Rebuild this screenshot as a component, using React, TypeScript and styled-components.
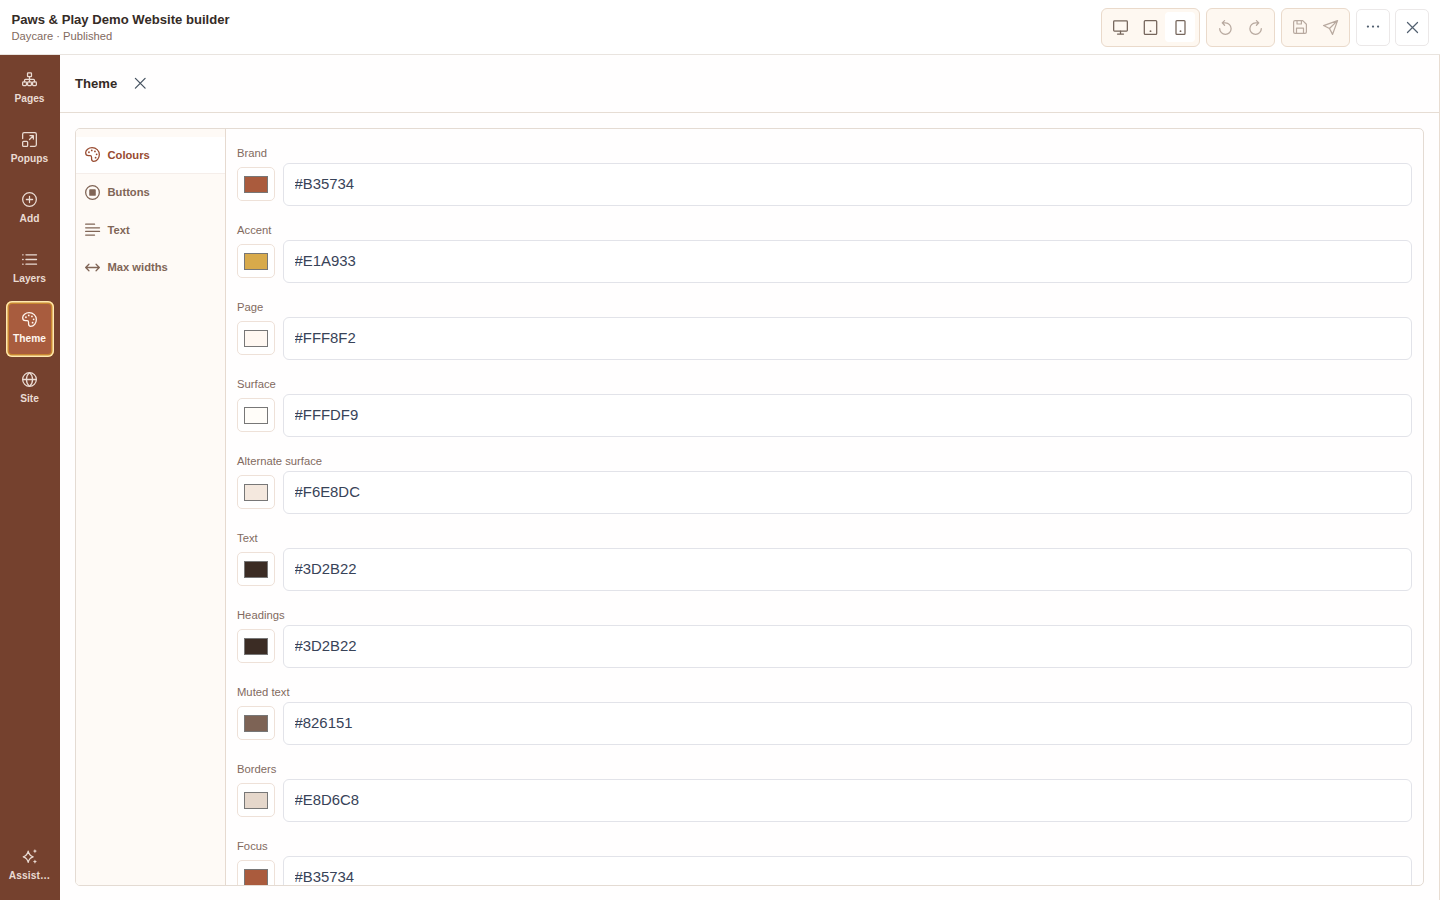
import React from 'react';
import styled, { createGlobalStyle, css } from 'styled-components';

const GlobalStyle = createGlobalStyle`
  *, *::before, *::after { box-sizing: border-box; }
  html, body { margin: 0; padding: 0; height: 100%; overflow: hidden; }
  body { font-family: 'Liberation Sans', Arial, Helvetica, sans-serif; background: #fffefd; }
  button, input { font-family: inherit; margin: 0; }
`;

const icons = {
  sitemap: (
    <>
      <rect x="5.9" y="0.9" width="4.2" height="4" rx="0.6" />
      <path d="M8 4.9v5.6M2.7 10.5V8.9a1 1 0 0 1 1-1h8.6a1 1 0 0 1 1 1v1.6" />
      <rect x="0.7" y="10.5" width="4" height="4" rx="0.9" />
      <rect x="6" y="10.5" width="4" height="4" rx="0.9" />
      <rect x="11.3" y="10.5" width="4" height="4" rx="0.9" />
    </>
  ),
  popup: (
    <>
      <path d="M0.7 7V2.3a1.6 1.6 0 0 1 1.6-1.6h11.4a1.6 1.6 0 0 1 1.6 1.6v11.4a1.6 1.6 0 0 1-1.6 1.6H9" />
      <rect x="0.7" y="10" width="5.3" height="5.3" rx="1" />
      <path d="M8 8l4-4M8.5 3.9H12.1V7.5" />
    </>
  ),
  plusCircle: (
    <>
      <circle cx="8" cy="8" r="7.3" />
      <path d="M8 4.7v6.6M4.7 8h6.6" />
    </>
  ),
  list: (
    <>
      <path d="M4.2 3h11.3M4.2 8h11.3M4.2 13h11.3" />
      <path d="M0.7 3h0.5M0.7 8h0.5M0.7 13h0.5" />
    </>
  ),
  palette: (
    <>
      <path d="M7.6 0.7C3.8 0.7 0.7 3.2 0.7 6c0 2 1.3 3.1 3.1 3.1h1.7c1.1 0 1.5 0.7 1.5 1.7v1.8c0 1.7 0.9 2.7 2.3 2.7 3.3 0 6-3.2 6-7.2 0-4.2-3.4-7.4-7.7-7.4z" />
      <g fill="currentColor" stroke="none">
        <circle cx="4.2" cy="5.6" r="0.95" />
        <circle cx="7.2" cy="3.7" r="0.95" />
        <circle cx="10.6" cy="4.7" r="0.95" />
        <circle cx="12.4" cy="7.8" r="0.95" />
        <circle cx="11.3" cy="11.4" r="0.95" />
      </g>
    </>
  ),
  globe: (
    <>
      <circle cx="8" cy="8" r="7.3" />
      <path d="M0.7 8h14.6M8 0.7c-2.2 2-3.3 4.5-3.3 7.3S5.8 13.3 8 15.3c2.2-2 3.3-4.5 3.3-7.3S10.2 2.7 8 0.7z" />
    </>
  ),
  sparkles: (
    <>
      <path d="M6.6 2.3c0.7 3.6 1.8 5 5.3 6-3.5 1-4.6 2.4-5.3 6-0.7-3.6-1.8-5-5.3-6 3.5-1 4.6-2.4 5.3-6z" />
      <g fill="currentColor" stroke="none">
        <path d="M13.8 0l0.7 1.500 1.500 0.700-1.500 0.700-0.700 1.500-0.700-1.500-1.500-0.700 1.500-0.700z" />
        <path d="M13.800 11.200l0.700 1.500 1.500 0.700-1.500 0.700-0.700 1.500-0.700-1.500-1.500-0.700 1.500-0.700z" />
      </g>
    </>
  ),
  stopCircle: (
    <>
      <circle cx="8" cy="8" r="7.3" />
      <rect x="4.500" y="4.500" width="7" height="7" rx="0.900" fill="currentColor" stroke="none" />
    </>
  ),
  alignLeft: <path d="M0.700 2.300h9.500M0.700 6.200h14.800M0.700 10h14.800M0.700 13.900h9.500" />,
  arrowsH: <path d="M0.700 8h14.600M4.200 4.500L0.700 8l3.500 3.500M11.800 4.500L15.300 8l-3.500 3.500" />,
  desktop: (
    <>
      <rect x="0.700" y="1" width="14.600" height="10.800" rx="0.900" />
      <path d="M8 11.800v3M4.800 15h6.400" />
    </>
  ),
  tablet: (
    <>
      <rect x="1.400" y="0.700" width="13.200" height="14.600" rx="1" />
      <circle cx="8" cy="11.900" r="1" fill="currentColor" stroke="none" />
    </>
  ),
  mobile: (
    <>
      <rect x="3.200" y="0.700" width="9.600" height="14.600" rx="1" />
      <circle cx="8" cy="11.900" r="1" fill="currentColor" stroke="none" />
    </>
  ),
  undo: <path d="M7 0.700L4.500 3.100 7 5.600M4.700 3.100H8a6.100 6.100 0 1 1-6.200 6.100" />,
  redo: <path d="M9 0.700l2.500 2.400L9 5.600M11.300 3.100H8a6.100 6.100 0 1 0 6.200 6.100" />,
  save: (
    <>
      <path d="M2.300 0.700h8.800l4.200 4.200v8.800a1.600 1.600 0 0 1-1.600 1.600H2.300a1.600 1.600 0 0 1-1.600-1.600V2.300a1.600 1.600 0 0 1 1.600-1.600z" />
      <path d="M4 15.300V9.300h8v6M4.600 0.700v3.900h5V0.700" />
    </>
  ),
  send: <path d="M15.500 0.700L0.600 5.900l6.300 3.200 3.300 6.200zM15.500 0.700L6.900 9.100" />,
  ellipsis: (
    <g fill="currentColor" stroke="none">
      <circle cx="2.200" cy="7.500" r="1.300" />
      <circle cx="8" cy="7.500" r="1.300" />
      <circle cx="13.800" cy="7.500" r="1.300" />
    </g>
  ),
  times: <path d="M1.800 1.800l12.400 12.400M14.200 1.800L1.800 14.200" />,
};

type IconName = keyof typeof icons;

const Svg = styled.svg<{ $size: number }>`
  display: block;
  flex: none;
  width: ${(p) => p.$size}px;
  height: ${(p) => p.$size}px;
  overflow: visible;
`;

function Icon({ name, size = 15, weight = 1.35 }: { name: IconName; size?: number; weight?: number }) {
  return (
    <Svg
      $size={size}
      viewBox="0 0 16 16"
      fill="none"
      stroke="currentColor"
      strokeWidth={weight}
      strokeLinecap="round"
      strokeLinejoin="round"
      aria-hidden="true"
    >
      {icons[name]}
    </Svg>
  );
}

const Shell = styled.div`
  display: flex;
  flex-direction: column;
  width: 100vw;
  height: 100vh;
  color: #352b26;
`;

const Header = styled.header`
  display: flex;
  flex: none;
  align-items: center;
  justify-content: space-between;
  height: 55px;
  padding: 0 11px 0 11.5px;
  background: #fff;
  border-bottom: 1px solid #e9e4df;
`;

const TitleBlock = styled.div`
  display: flex;
  flex-direction: column;
  gap: 2px;
  padding-top: 2px;
`;

const SiteTitle = styled.h1`
  margin: 0;
  font-size: 13.1px;
  line-height: 15px;
  font-weight: 700;
  white-space: nowrap;
`;

const SiteStatus = styled.span`
  font-size: 11.2px;
  line-height: 15px;
  color: #826a5e;
`;

const Actions = styled.div`
  display: flex;
  align-items: center;
  gap: 5.500px;
`;

const ButtonGroup = styled.div`
  display: flex;
  align-items: center;
  height: 39px;
  padding: 0 3.750px;
  background: #fef8f1;
  border: 1px solid #eadacb;
  border-radius: 6px;
`;

const ToolButton = styled.button<{ $active?: boolean; $muted?: boolean }>`
  display: flex;
  align-items: center;
  justify-content: center;
  width: 30px;
  height: 30px;
  padding: 0;
  border: 0;
  border-radius: 4px;
  background: ${(p) => (p.$active ? '#fff' : 'transparent')};
  color: ${(p) => (p.$muted ? '#b8a99f' : '#75655b')};
`;

const SquareButton = styled.button`
  display: flex;
  align-items: center;
  justify-content: center;
  width: 34px;
  height: 37px;
  padding: 0;
  background: #fff;
  border: 1px solid #ebe8e8;
  border-radius: 5px;
  color: #526070;
`;

const Body = styled.div`
  display: flex;
  flex: 1;
  min-height: 0;
`;

const Rail = styled.nav`
  display: flex;
  flex: none;
  flex-direction: column;
  gap: 4px;
  width: 60px;
  padding: 6px 5.500px 12px;
  background: #75412e;
`;

const RailItem = styled.button<{ $active?: boolean; $last?: boolean }>`
  display: flex;
  flex: none;
  flex-direction: column;
  align-items: center;
  gap: 5px;
  width: 48px;
  height: 56px;
  padding: 11px 0 0;
  border: 0;
  border-radius: 6px;
  background: transparent;
  color: #eadbd3;
  font-size: 10.2px;
  line-height: 13px;
  font-weight: 700;
  white-space: nowrap;
  ${(p) =>
    p.$active &&
    css`
      background: #a85c3e;
      color: #fff6ef;
      box-shadow: inset 0 0 0 1.5px #ffe9ae, inset 0 0 0 3px #c98731;
    `}
  ${(p) =>
    p.$last &&
    css`
      margin-top: auto;
      height: 50px;
      letter-spacing: 0.1px;
    `}
`;

const RailLabel = styled.span`
  margin: 0 -2px;
`;

const Panel = styled.main`
  display: flex;
  flex: 1;
  flex-direction: column;
  min-width: 0;
  background: #fffefe;
  border-right: 1px solid #e8ddd2;
`;

const PanelHeader = styled.div`
  display: flex;
  flex: none;
  align-items: center;
  gap: 16.5px;
  height: 58px;
  padding: 0 15px;
  border-bottom: 1px solid #e6ddd4;
`;

const PanelTitle = styled.h2`
  margin: 0;
  font-size: 13.1px;
  line-height: 15px;
  font-weight: 700;
`;

const CloseButton = styled.button`
  display: flex;
  padding: 0;
  border: 0;
  background: none;
  color: #44515f;
`;

const Card = styled.section`
  display: flex;
  flex: 1;
  min-height: 0;
  margin: 15px 15px 14.5px;
  overflow: hidden;
  border: 1px solid #e4dbd3;
  border-radius: 5px;
`;

const SectionNav = styled.div`
  display: flex;
  flex: none;
  flex-direction: column;
  width: 150px;
  padding-top: 7.5px;
  background: #fefaf6;
  border-right: 1px solid #e6dad0;
`;

const SectionItem = styled.button<{ $active?: boolean }>`
  display: flex;
  align-items: center;
  gap: 7.5px;
  height: 37.5px;
  padding: 0 9px;
  border: 0;
  border-bottom: 1px solid ${(p) => (p.$active ? '#f5eeea' : 'transparent')};
  background: ${(p) => (p.$active ? '#fff' : 'transparent')};
  color: ${(p) => (p.$active ? '#984b30' : '#806556')};
  font-size: 11.2px;
  font-weight: 700;
`;

const Fields = styled.div`
  display: flex;
  flex: 1;
  flex-direction: column;
  gap: 16px;
  min-width: 0;
  padding: 16.5px 11px 0 11px;
  overflow: hidden;
`;

const Field = styled.div`
  display: flex;
  flex: none;
  flex-direction: column;
  gap: 3px;
  height: 61px;
`;

const FieldLabel = styled.label`
  height: 14px;
  font-size: 11.25px;
  line-height: 14px;
  color: #826a5e;
`;

const FieldRow = styled.div`
  display: flex;
  align-items: center;
  gap: 7.5px;
`;

const SwatchButton = styled.button`
  display: flex;
  align-items: center;
  justify-content: center;
  flex: none;
  width: 38px;
  height: 34px;
  padding: 0;
  background: #fff;
  border: 1px solid #eee1d8;
  border-radius: 5px;
`;

const Swatch = styled.span<{ $color: string }>`
  width: 24.5px;
  height: 17px;
  background: ${(p) => p.$color};
  border: 1px solid #777;
`;

const HexInput = styled.input`
  flex: 1;
  min-width: 0;
  height: 43.5px;
  padding: 0 11px 1px;
  background: #fff;
  border: 1px solid #e2e3e9;
  border-radius: 6px;
  outline: none;
  color: #384358;
  font-size: 14.9px;
`;

const railItems: { icon: IconName; label: string; active?: boolean }[] = [
  { icon: 'sitemap', label: 'Pages' },
  { icon: 'popup', label: 'Popups' },
  { icon: 'plusCircle', label: 'Add' },
  { icon: 'list', label: 'Layers' },
  { icon: 'palette', label: 'Theme', active: true },
  { icon: 'globe', label: 'Site' },
];

const sections: { icon: IconName; label: string; active?: boolean }[] = [
  { icon: 'palette', label: 'Colours', active: true },
  { icon: 'stopCircle', label: 'Buttons' },
  { icon: 'alignLeft', label: 'Text' },
  { icon: 'arrowsH', label: 'Max widths' },
];

const colours = [
  { label: 'Brand', hex: '#B35734', swatch: '#aa5b3d' },
  { label: 'Accent', hex: '#E1A933', swatch: '#d8aa4b' },
  { label: 'Page', hex: '#FFF8F2', swatch: '#fff8f2' },
  { label: 'Surface', hex: '#FFFDF9', swatch: '#fffdf9' },
  { label: 'Alternate surface', hex: '#F6E8DC', swatch: '#f4e8de' },
  { label: 'Text', hex: '#3D2B22', swatch: '#3b2c24' },
  { label: 'Headings', hex: '#3D2B22', swatch: '#3b2c24' },
  { label: 'Muted text', hex: '#826151', swatch: '#7d6355' },
  { label: 'Borders', hex: '#E8D6C8', swatch: '#e5d7cb' },
  { label: 'Focus', hex: '#B35734', swatch: '#aa5b3d' },
];

export default function App() {
  return (
    <>
      <GlobalStyle />
      <Shell>
        <Header>
          <TitleBlock>
            <SiteTitle>Paws &amp; Play Demo Website builder</SiteTitle>
            <SiteStatus>Daycare · Published</SiteStatus>
          </TitleBlock>
          <Actions>
            <ButtonGroup>
              <ToolButton aria-label="Desktop"><Icon name="desktop" /></ToolButton>
              <ToolButton aria-label="Tablet"><Icon name="tablet" /></ToolButton>
              <ToolButton aria-label="Mobile" $active><Icon name="mobile" /></ToolButton>
            </ButtonGroup>
            <ButtonGroup>
              <ToolButton aria-label="Undo" $muted><Icon name="undo" /></ToolButton>
              <ToolButton aria-label="Redo" $muted><Icon name="redo" /></ToolButton>
            </ButtonGroup>
            <ButtonGroup>
              <ToolButton aria-label="Save" $muted><Icon name="save" size={14} /></ToolButton>
              <ToolButton aria-label="Publish" $muted><Icon name="send" /></ToolButton>
            </ButtonGroup>
            <SquareButton aria-label="More"><Icon name="ellipsis" size={14} /></SquareButton>
            <SquareButton aria-label="Close"><Icon name="times" size={13} weight={1.5} /></SquareButton>
          </Actions>
        </Header>
        <Body>
          <Rail>
            {railItems.map((item) => (
              <RailItem key={item.label} $active={item.active}>
                <Icon name={item.icon} />
                <RailLabel>{item.label}</RailLabel>
              </RailItem>
            ))}
            <RailItem $last>
              <Icon name="sparkles" />
              <RailLabel>Assist…</RailLabel>
            </RailItem>
          </Rail>
          <Panel>
            <PanelHeader>
              <PanelTitle>Theme</PanelTitle>
              <CloseButton aria-label="Close theme"><Icon name="times" size={12.5} weight={1.6} /></CloseButton>
            </PanelHeader>
            <Card>
              <SectionNav>
                {sections.map((section) => (
                  <SectionItem key={section.label} $active={section.active}>
                    <Icon name={section.icon} />
                    {section.label}
                  </SectionItem>
                ))}
              </SectionNav>
              <Fields>
                {colours.map((colour) => (
                  <Field key={colour.label}>
                    <FieldLabel>{colour.label}</FieldLabel>
                    <FieldRow>
                      <SwatchButton aria-label={colour.label}>
                        <Swatch $color={colour.swatch} />
                      </SwatchButton>
                      <HexInput defaultValue={colour.hex} aria-label={colour.label} />
                    </FieldRow>
                  </Field>
                ))}
              </Fields>
            </Card>
          </Panel>
        </Body>
      </Shell>
    </>
  );
}
